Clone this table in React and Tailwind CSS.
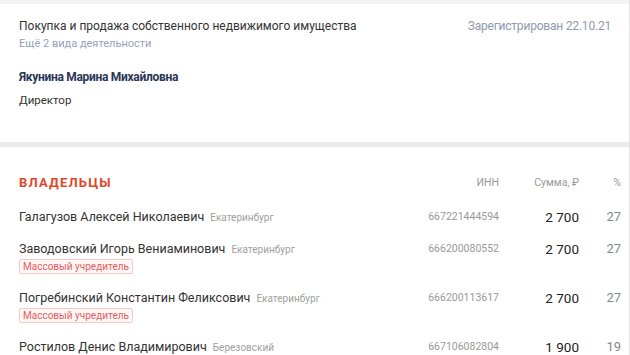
import React from 'react';

const owners = [
    { name: 'Галагузов Алексей Николаевич', city: 'Екатеринбург', inn: '667221444594', sum: '2 700', pct: '27' },
    { name: 'Заводовский Игорь Вениаминович', city: 'Екатеринбург', inn: '666200080552', sum: '2 700', pct: '27', mass: true },
    { name: 'Погребинский Константин Феликсович', city: 'Екатеринбург', inn: '666200113617', sum: '2 700', pct: '27', mass: true },
    { name: 'Ростилов Денис Владимирович', city: 'Березовский', inn: '667106082804', sum: '1 900', pct: '19' },
];

export default function App() {
    return (
        <div className="w-[630px] h-[355px] overflow-hidden bg-white border-r border-[#e6e6e6] font-['Roboto',sans-serif]">
            <div className="h-[4px] bg-[#f2f2f2]"></div>

            <div className="pl-[19px] pr-[18px] pt-[14px] pb-[34px]">
                <div className="flex justify-between items-center h-[16px]">
                    <p className="text-[12px] leading-[16px] text-[#333]">Покупка и продажа собственного недвижимого имущества</p>
                    <p className="text-[12px] leading-[16px] tracking-[-0.2px] text-[#8e99ad]">Зарегистрирован 22.10.21</p>
                </div>
                <p className="mt-[2px] text-[11px] leading-[16px] text-[#95a3ba]">Ещё 2 вида деятельности</p>
                <p className="mt-[17px] text-[12px] leading-[16px] tracking-[-0.3px] font-bold text-[#2b3656]">Якунина Марина Михайловна</p>
                <p className="mt-[7px] text-[11.5px] leading-[16px] text-[#333]">Директор</p>
            </div>

            <div className="h-[5px] bg-[#ebebeb]"></div>

            <div className="pl-[19px] pr-[8px] pt-[28px]">
                <div className="grid grid-cols-[1fr_120px_80px_42px] items-center h-[16px]">
                    <p className="text-[13px] leading-[16px] font-bold tracking-[1.2px] text-[#e0472a]">ВЛАДЕЛЬЦЫ</p>
                    <p className="text-right text-[10.5px] leading-[16px] text-[#999]">ИНН</p>
                    <p className="text-right text-[10.5px] leading-[16px] text-[#999]">Сумма, ₽</p>
                    <p className="text-right text-[10.5px] leading-[16px] text-[#999]">%</p>
                </div>

                <div className="mt-[18px] flex flex-col gap-[16px]">
                    {owners.map((o, i) => (
                        <div key={i} className="grid grid-cols-[1fr_120px_80px_42px] items-start">
                            <div>
                                <div className="flex items-baseline h-[16px] whitespace-nowrap">
                                    <span className="text-[12.5px] leading-[16px] text-[#333]">{o.name}</span>
                                    <span className="ml-[6px] text-[10px] leading-[16px] text-[#a0a0a0]">{o.city}</span>
                                </div>
                                {o.mass && (
                                    <div className="mt-[2px] w-fit h-[15px] px-[3px] rounded-[2px] border border-[#f6c9c9] bg-[#fff6f6] text-[10px] leading-[13px] text-[#e4605e]">
                                        Массовый учредитель
                                    </div>
                                )}
                            </div>
                            <p className="text-right text-[10.5px] leading-[16px] text-[#999]">{o.inn}</p>
                            <p className="text-right text-[13.5px] leading-[16px] text-[#222]">{o.sum}</p>
                            <p className="text-right text-[13px] leading-[16px] text-[#888]">{o.pct}</p>
                        </div>
                    ))}
                </div>
            </div>
        </div>
    );
}
